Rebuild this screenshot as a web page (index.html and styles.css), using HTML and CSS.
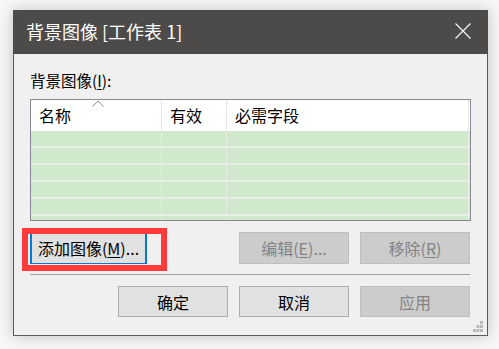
FILE: index.html
```html
<!DOCTYPE html>
<html lang="zh-CN">
<head>
<meta charset="utf-8">
<link rel="stylesheet" href="styles.css">
</head>
<body>
<div class="window">
  <div class="titlebar">
    <span class="title">背景图像 [工作表 1]</span>
    <svg class="close" width="16" height="16" viewBox="0 0 16 16"><path d="M0.5 0.5 L15.5 15.5 M15.5 0.5 L0.5 15.5" stroke="#fff" stroke-width="1.1" fill="none"/></svg>
  </div>
  <div class="content">
    <div class="label">背景图像(<u>I</u>):</div>
    <div class="list">
      <div class="header">
        <div class="col c1">名称<svg class="sort" width="12" height="7" viewBox="0 0 12 7"><path d="M0.5 6.5 L6 1 L11.5 6.5" stroke="#8a8a8a" stroke-width="1" fill="none"/></svg></div>
        <div class="col c2">有效</div>
        <div class="col c3">必需字段</div>
      </div>
      <div class="rows">
        <div class="row first"><div class="cell c1"></div><div class="cell c2"></div><div class="cell c3"></div></div>
        <div class="row"><div class="cell c1"></div><div class="cell c2"></div><div class="cell c3"></div></div>
        <div class="row"><div class="cell c1"></div><div class="cell c2"></div><div class="cell c3"></div></div>
        <div class="row"><div class="cell c1"></div><div class="cell c2"></div><div class="cell c3"></div></div>
        <div class="row"><div class="cell c1"></div><div class="cell c2"></div><div class="cell c3"></div></div>
        <div class="row last"><div class="cell c1"></div><div class="cell c2"></div><div class="cell c3"></div></div>
      </div>
    </div>
    <div class="btnrow top">
      <button class="btn add">添加图像(<u>M</u>)...</button>
      <div class="spacer"></div>
      <button class="btn disabled">编辑(<u>E</u>)...</button>
      <button class="btn disabled">移除(<u>R</u>)</button>
    </div>
    <div class="sep"></div>
    <div class="btnrow bottom">
      <div class="spacer"></div>
      <button class="btn">确定</button>
      <button class="btn">取消</button>
      <button class="btn disabled">应用</button>
    </div>
  </div>
  <div class="redbox"></div>
  <svg class="grip" width="11" height="12" viewBox="0 0 11 12">
    <rect x="7" y="0" width="3" height="3" fill="#b9b9b9"/>
    <rect x="3.5" y="4" width="3" height="3" fill="#b9b9b9"/>
    <rect x="7" y="4" width="3" height="3" fill="#b9b9b9"/>
    <rect x="0" y="8" width="3" height="3" fill="#b9b9b9"/>
    <rect x="3.5" y="8" width="3" height="3" fill="#b9b9b9"/>
    <rect x="7" y="8" width="3" height="3" fill="#b9b9b9"/>
  </svg>
</div>
</body>
</html>
```

FILE: styles.css
```css
html, body {
  margin: 0;
  padding: 0;
  background: #f7f7f7;
  width: 499px;
  height: 349px;
  overflow: hidden;
  font-family: "Noto Sans CJK SC", "Noto Sans", sans-serif;
}
body {
  padding: 10px 0 0 13px;
  box-sizing: border-box;
}
.window {
  position: relative;
  width: 475px;
  height: 326px;
  box-sizing: border-box;
  border: 1px solid #5b5b5b;
  border-top: none;
  background: #f0f0f0;
  box-shadow: 0 0 14px rgba(0,0,0,0.22);
  display: flex;
  flex-direction: column;
}
.titlebar {
  height: 44px;
  margin: 0 -1px;
  background: #4d4b49;
  display: flex;
  align-items: center;
  padding: 0 17px 0 13px;
  color: #fff;
  flex-shrink: 0;
}
.title {
  font-size: 18px;
  flex: 1;
  line-height: 20px;
  margin-top: -2px;
}
.close { display: block; margin-top: -2px; }
.content {
  padding: 0 17px 0 16px;
  display: flex;
  flex-direction: column;
}
.label {
  font-size: 15.5px;
  line-height: 20px;
  margin-top: 16px;
  color: #000;
}
.label u, .btn u { text-underline-offset: 2px; }
.list {
  margin-top: 9px;
  margin-right: -1px;
  height: 122px;
  box-sizing: border-box;
  border: 1px solid #86898f;
  background: #fff;
  overflow: hidden;
}
.header {
  display: flex;
  height: 31px;
  background: #fff;
}
.col {
  position: relative;
  font-size: 16px;
  line-height: 31px;
  padding-left: 8px;
  box-sizing: border-box;
  border-right: 1px solid #e5e5e5;
  color: #000;
}
.c1 { width: 131px; }
.c2 { width: 65px; }
.c3 { width: 242px; }
.sort {
  position: absolute;
  left: 61px;
  top: 0px;
  display: block;
}
.rows { background: #d0e9cc; }
.row {
  display: flex;
  height: 17px;
  border-top: 2px solid #e8ede6;
  box-sizing: border-box;
}
.row.first { height: 15px; border-top: none; }
.row.last { height: 8px; }
.cell {
  box-sizing: border-box;
  border-right: 1px solid #e6ece4;
  height: 100%;
}
.btnrow {
  display: flex;
  gap: 11px;
}
.btnrow.top { margin-top: 11px; }
.spacer { flex: 1; }
.btn {
  width: 110px;
  height: 32px;
  box-sizing: border-box;
  border: 1px solid #adadad;
  background: #e1e1e1;
  font-family: "Noto Sans CJK SC", "Noto Sans", sans-serif;
  font-size: 16px;
  color: #000;
  padding: 0;
  line-height: 28px;
}
.btn.add {
  width: 117px;
  border: 2px solid #0078d7;
  border-top-width: 1px;
  border-bottom-width: 1px;
  font-size: 16px;
}
.btn.disabled {
  background: #cccccc;
  border-color: #bfbfbf;
  color: #838383;
}
.sep {
  margin-top: 10px;
  height: 0;
  border-top: 1px solid #a0a0a0;
}
.btnrow.bottom { margin-top: 11px; }
.btnrow.bottom .btn { height: 31px; }
.redbox {
  position: absolute;
  left: 8px;
  top: 218px;
  width: 145px;
  height: 43px;
  box-sizing: border-box;
  border: 6px solid #ff3b3b;
}
.grip {
  position: absolute;
  right: 3px;
  bottom: 2px;
}
```
